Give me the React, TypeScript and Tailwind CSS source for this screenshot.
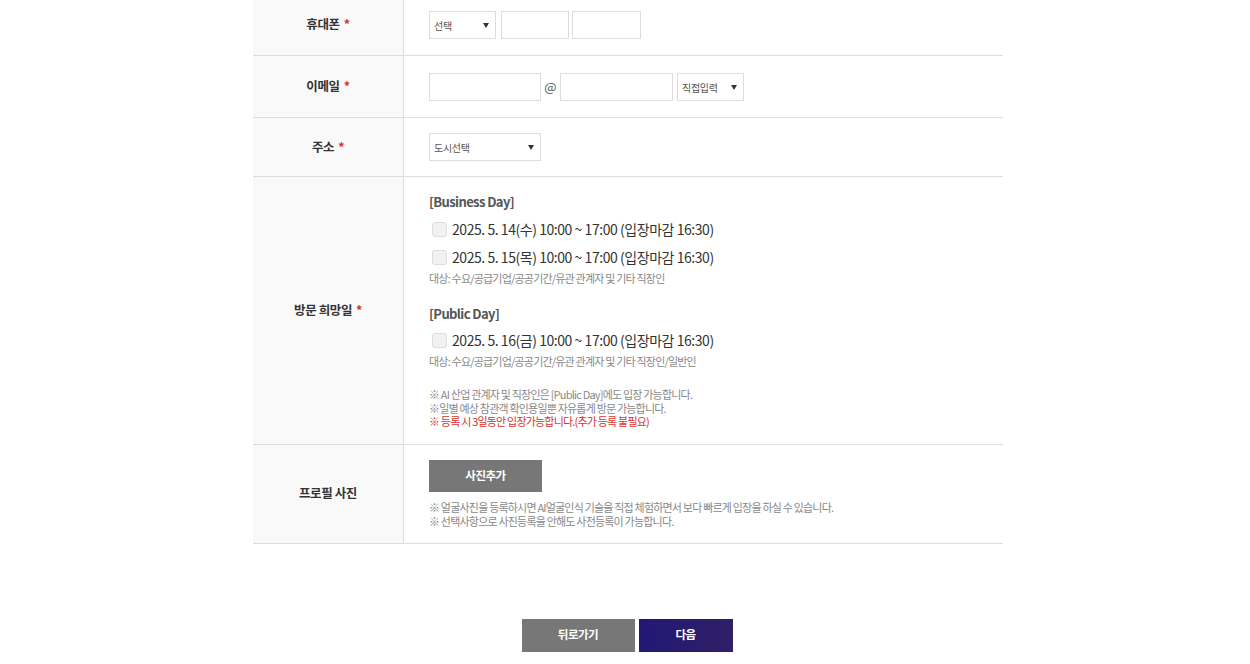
import React from "react";

const font = { fontFamily: '"Noto Sans CJK KR", "Noto Sans", sans-serif' };

function Label({ children, req = true }: { children: React.ReactNode; req?: boolean }) {
  return (
    <div className="w-[151px] shrink-0 bg-[#f9f9f9] border-r border-[#dddddd] flex items-center justify-center text-[12.5px] font-bold text-[#333333] tracking-[-0.4px]">
      <span>
        {children}
        {req && <span className="text-[#d8332a] ml-[4px]">*</span>}
      </span>
    </div>
  );
}

function Arrow() {
  return (
    <svg width="6" height="5" viewBox="0 0 6 5" className="shrink-0">
      <path d="M0 0 L6 0 L3 5 Z" fill="#333333" />
    </svg>
  );
}

function Select({ w, text }: { w: string; text: string }) {
  return (
    <div className={`${w} shrink-0 h-[28px] border border-[#dddddd] bg-white flex items-center justify-between pl-[4px] pr-[6px] text-[10px] text-[#555555] tracking-[-0.3px]`}>
      <span>{text}</span>
      <Arrow />
    </div>
  );
}

function Input({ w }: { w: string }) {
  return <div className={`${w} shrink-0 h-[28px] border border-[#dddddd] bg-white`} />;
}

function DateRow({ text }: { text: string }) {
  return (
    <div className="h-[28px] flex items-center">
      <div className="w-[15px] h-[15px] ml-[3px] mr-[5px] rounded-[3px] border border-[#dddddd] bg-[#f1f1f1]" />
      <span className="text-[14px] text-[#333333] tracking-[-0.45px]">{text}</span>
    </div>
  );
}

export default function App() {
  return (
    <div className="w-full min-h-[664px] bg-white overflow-hidden" style={font}>
      <div className="flex justify-center pl-[6px]">
        <div className="w-[750px] mt-[-7px] border-t border-[#dddddd]">
          {/* phone */}
          <div className="flex border-b border-[#dddddd]">
            <Label>휴대폰</Label>
            <div className="flex-1 pl-[25px] pt-[17px] pb-[16px] flex">
              <Select w="w-[67px]" text="선택" />
              <div className="w-[5px] shrink-0" />
              <Input w="w-[68px]" />
              <div className="w-[3px] shrink-0" />
              <Input w="w-[69px]" />
            </div>
          </div>
          {/* email */}
          <div className="flex border-b border-[#dddddd]">
            <Label>이메일</Label>
            <div className="flex-1 pl-[25px] pt-[17px] pb-[16px] flex items-center">
              <Input w="w-[112px]" />
              <span className="w-[19px] text-center text-[13px] text-[#555555]">@</span>
              <Input w="w-[113px]" />
              <div className="w-[4px]" />
              <Select w="w-[67px]" text="직접입력" />
            </div>
          </div>
          {/* address */}
          <div className="flex border-b border-[#dddddd]">
            <Label>주소</Label>
            <div className="flex-1 pl-[25px] pt-[15px] pb-[15px] flex">
              <Select w="w-[112px]" text="도시선택" />
            </div>
          </div>
          {/* visit date */}
          <div className="flex border-b border-[#dddddd]">
            <Label>방문 희망일</Label>
            <div className="flex-1 pl-[25px] pt-[15px] pb-[15px]">
              <div className="h-[20px] leading-[20px] text-[13px] font-bold text-[#555555] tracking-[-0.6px]">[Business Day]</div>
              <div className="h-[3px]" />
              <DateRow text="2025. 5. 14(수) 10:00 ~ 17:00 (입장마감 16:30)" />
              <DateRow text="2025. 5. 15(목) 10:00 ~ 17:00 (입장마감 16:30)" />
              <div className="h-[14px] leading-[14px] text-[11px] text-[#888888] tracking-[-0.8px]">대상: 수요/공급기업/공공기간/유관 관계자 및 기타 직장인</div>
              <div className="h-[19px]" />
              <div className="h-[20px] leading-[20px] text-[13px] font-bold text-[#555555] tracking-[-0.6px]">[Public Day]</div>
              <div className="h-[2px]" />
              <DateRow text="2025. 5. 16(금) 10:00 ~ 17:00 (입장마감 16:30)" />
              <div className="h-[14px] leading-[14px] text-[11px] text-[#888888] tracking-[-0.8px]">대상: 수요/공급기업/공공기간/유관 관계자 및 기타 직장인/일반인</div>
              <div className="h-[20px]" />
              <div className="text-[11px] leading-[13.5px] text-[#888888] tracking-[-0.8px]">
                <div>※ AI 산업 관계자 및 직장인은 [Public Day]에도 입장 가능합니다.</div>
                <div>※일별 예상 참관객 확인용일뿐 자유롭게 방문 가능합니다.</div>
                <div className="text-[#d8332a]">※ 등록 시 3일동안 입장가능합니다.(추가 등록 불필요)</div>
              </div>
            </div>
          </div>
          {/* photo */}
          <div className="flex border-b border-[#dddddd]">
            <Label req={false}>프로필 사진</Label>
            <div className="flex-1 pl-[25px] pt-[15px] pb-[15px]">
              <div className="w-[113px] h-[32px] bg-[#777777] flex items-center justify-center text-[11.5px] font-bold text-white tracking-[-0.5px]">사진추가</div>
              <div className="h-[8px]" />
              <div className="text-[11px] leading-[14px] text-[#888888] tracking-[-0.8px]">
                <div>※ 얼굴사진을 등록하시면 AI얼굴인식 기술을 직접 체험하면서 보다 빠르게 입장을 하실 수 있습니다.</div>
                <div>※ 선택사항으로 사진등록을 안해도 사전등록이 가능합니다.</div>
              </div>
            </div>
          </div>
        </div>
      </div>
      {/* buttons */}
      <div className="flex justify-center gap-[4px] mt-[75px] pl-[4px]">
        <div className="w-[113px] h-[33px] bg-[#777777] flex items-center justify-center text-[11.5px] font-bold text-white tracking-[-0.5px]">뒤로가기</div>
        <div className="w-[94px] h-[33px] bg-gradient-to-r from-[#221875] to-[#301f66] flex items-center justify-center text-[11.5px] font-bold text-white tracking-[-0.5px]">다음</div>
      </div>
    </div>
  );
}
